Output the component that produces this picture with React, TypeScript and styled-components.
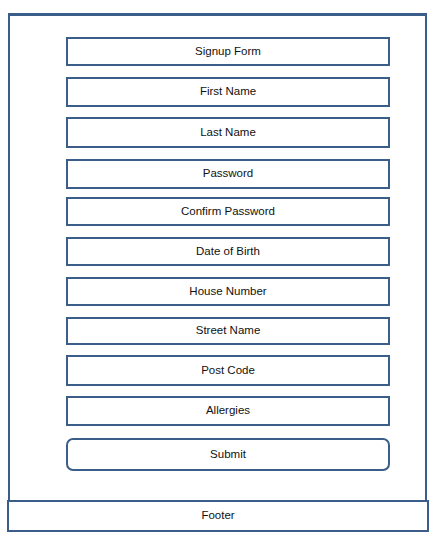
import React from "react";
import styled, { createGlobalStyle } from "styled-components";

const GlobalStyle = createGlobalStyle`
  html, body {
    margin: 0;
    padding: 0;
    background: #ffffff;
  }
  body {
    font-family: "Liberation Sans", Arial, sans-serif;
    color: #111111;
  }
`;

const Page = styled.div`
  width: 438px;
  height: 542px;
  padding-top: 13px;
  box-sizing: border-box;
  display: flex;
  flex-direction: column;
`;

const Frame = styled.div`
  margin-left: 8px;
  width: 419px;
  height: 487px;
  box-sizing: border-box;
  border: 2px solid #3b5d8a;
  border-top-width: 3px;
  border-bottom: none;
  padding: 21px 0 0 56px;
  display: flex;
  flex-direction: column;
`;

const Field = styled.div<{ $rounded?: boolean; $h: number; $gap: number }>`
  width: 324px;
  height: ${(p) => p.$h}px;
  margin-top: ${(p) => p.$gap}px;
  flex-shrink: 0;
  box-sizing: border-box;
  border: 2px solid #3b5d8a;
  border-radius: ${(p) => (p.$rounded ? "7px" : "0")};
  display: flex;
  align-items: center;
  justify-content: center;
  padding-bottom: 2px;
  font-size: 11.5px;
  color: #111111;
`;

const Footer = styled.div`
  margin-left: 7px;
  width: 422px;
  height: 32px;
  box-sizing: border-box;
  border: 2px solid #3b5d8a;
  display: flex;
  align-items: center;
  justify-content: center;
  padding-bottom: 3px;
  font-size: 11.5px;
  color: #111111;
`;

const fields: { label: string; h: number; gap: number; rounded?: boolean }[] = [
  { label: "Signup Form", h: 29, gap: 0 },
  { label: "First Name", h: 30, gap: 11 },
  { label: "Last Name", h: 31, gap: 10 },
  { label: "Password", h: 30, gap: 11 },
  { label: "Confirm Password", h: 29, gap: 8 },
  { label: "Date of Birth", h: 29, gap: 11 },
  { label: "House Number", h: 29, gap: 11 },
  { label: "Street Name", h: 28, gap: 11 },
  { label: "Post Code", h: 31, gap: 10 },
  { label: "Allergies", h: 30, gap: 10 },
  { label: "Submit", h: 33, gap: 12, rounded: true },
];

export default function App() {
  return (
    <>
      <GlobalStyle />
      <Page>
        <Frame>
          {fields.map((f) => (
            <Field key={f.label} $h={f.h} $gap={f.gap} $rounded={f.rounded}>
              {f.label}
            </Field>
          ))}
        </Frame>
        <Footer>Footer</Footer>
      </Page>
    </>
  );
}
